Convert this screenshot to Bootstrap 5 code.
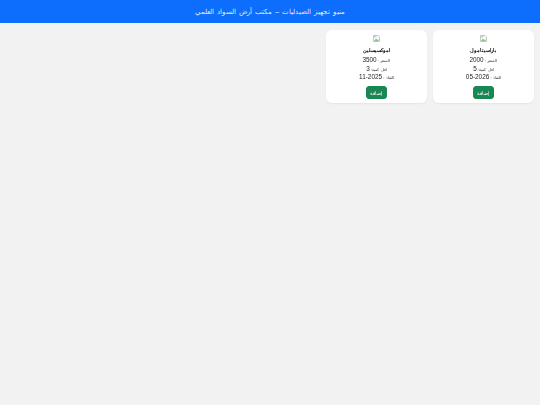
<!DOCTYPE html>
<html lang="ar" dir="rtl">
<head>
  <meta charset="UTF-8">
  <title>منيو تجهيز الصيدليات</title>
  <link href="https://cdn.jsdelivr.net/npm/bootstrap@5.3.3/dist/css/bootstrap.min.css" rel="stylesheet">
  <style>
    body {
      background-color: #f2f2f2;
      font-family: "Liberation Sans", "Noto Sans", sans-serif;
      font-size: 7px;
      color: #212529;
    }
    .top-bar {
      background-color: #0d6efd;
      color: rgba(255,255,255,0.9);
      height: 23px;
      line-height: 23px;
      font-size: 7.3px;
      word-spacing: 1px;
    }
    .drug-grid {
      display: grid;
      grid-template-columns: repeat(5, 1fr);
      gap: 6px;
      padding: 7px 6px;
    }
    .drug-card {
      background-color: #fff;
      border-radius: 6px;
      height: 73px;
      padding-top: 5px;
      box-shadow: 0 1px 2px rgba(0,0,0,0.06);
      will-change: transform;
    }
    .broken-pic {
      display: block;
      width: 7px;
      height: 7px;
      margin: 0 auto;
    }
    .drug-name {
      font-size: 5.2px;
      font-weight: bold;
      line-height: 9px;
      margin: 4px 0 2px;
      color: #000;
    }
    .drug-line {
      font-size: 4.4px;
      height: 8.5px;
      line-height: 8.5px;
      color: #333;
    }
    .drug-line bdi {
      font-size: 6.4px;
      line-height: 1;
      color: #212529;
    }
    .add-btn {
      display: block;
      width: 21px;
      height: 13px;
      font-size: 4.6px;
      line-height: 9px;
      padding: 2px 0;
      margin: 3.5px auto 0;
      border-radius: 3px;
      background-color: #198754;
      border-color: #198754;
    }
  </style>
</head>
<body>

<div class="top-bar text-center">منيو تجهيز الصيدليات – مكتب أرض السواد العلمي</div>

<div class="drug-grid">
  <div class="drug-card text-center">
    <svg class="broken-pic" viewBox="0 0 7 7"><path d="M.5.5h4.500l1.500 1.500v4.500h-6z" fill="#fff" stroke="#c4c4c4"/><path d="M1 6l2-2.500 1.500 1.500 1-1v2z" fill="#8fbf7a"/><path d="M1 1h2.500v1.500h-2.500z" fill="#b9d0ee"/></svg>
    <div class="drug-name">باراسيتامول</div>
    <div class="drug-line">السعر : <bdi>2000</bdi></div>
    <div class="drug-line">اقل كمية: <bdi>5</bdi></div>
    <div class="drug-line">النفاذ : <bdi>05-2026</bdi></div>
    <button type="button" class="btn btn-success add-btn">إضافة</button>
  </div>
  <div class="drug-card text-center">
    <svg class="broken-pic" viewBox="0 0 7 7"><path d="M.5.5h4.500l1.500 1.500v4.500h-6z" fill="#fff" stroke="#c4c4c4"/><path d="M1 6l2-2.500 1.500 1.500 1-1v2z" fill="#8fbf7a"/><path d="M1 1h2.500v1.500h-2.500z" fill="#b9d0ee"/></svg>
    <div class="drug-name">اموكسيسلين</div>
    <div class="drug-line">السعر : <bdi>3500</bdi></div>
    <div class="drug-line">اقل كمية: <bdi>3</bdi></div>
    <div class="drug-line">النفاذ : <bdi>11-2025</bdi></div>
    <button type="button" class="btn btn-success add-btn">إضافة</button>
  </div>
</div>

<script src="https://cdn.jsdelivr.net/npm/bootstrap@5.3.3/dist/js/bootstrap.bundle.min.js"></script>
</body>
</html>
